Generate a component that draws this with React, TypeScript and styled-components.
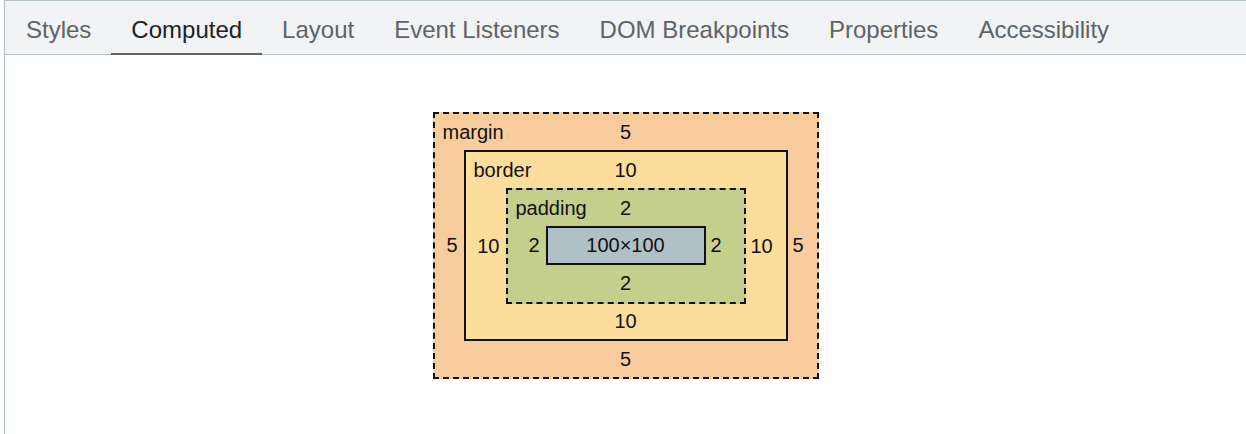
import styled, { createGlobalStyle } from "styled-components";

const GlobalStyle = createGlobalStyle`
    html, body {
        margin: 0;
        padding: 0;
        background: white;
    }
    body {
        font-family: "Liberation Sans", Arial, sans-serif;
    }
`;

const Panel = styled.div`
    margin-left: 4px;
    height: 434px;
    border-left: 1px solid #b3c1c7;
    box-sizing: border-box;
    overflow: hidden;
`;

const TabBar = styled.div`
    display: flex;
    height: 55px;
    box-sizing: border-box;
    padding-left: 1px;
    background: #f1f3f4;
    border-top: 1px solid #b3c1c7;
    border-bottom: 1px solid #b3c1c7;
`;

const Tab = styled.div<{ $active?: boolean }>`
    display: flex;
    align-items: center;
    padding: 6px 20px 0;
    margin-bottom: -1px;
    font-size: 24px;
    color: ${(p) => (p.$active ? "#202124" : "#5f6368")};
    border-bottom: 2px solid ${(p) => (p.$active ? "#5f6368" : "transparent")};
    white-space: nowrap;
`;

const Content = styled.div`
    display: flex;
    justify-content: center;
    padding-top: 57px;
`;

const Box = styled.div<{
    $bg: string;
    $dashed?: boolean;
    $side: number;
    $top: number;
    $bottom: number;
}>`
    display: grid;
    grid-template-columns: ${(p) => p.$side}px auto ${(p) => p.$side}px;
    grid-template-rows: ${(p) => p.$top}px auto ${(p) => p.$bottom}px;
    background: ${(p) => p.$bg};
    border: 2px ${(p) => (p.$dashed ? "dashed" : "solid")} #111;
    font-size: 20px;
    color: #111;
`;

const TopRow = styled.div`
    grid-column: 1 / 4;
    display: grid;
    grid-template-columns: 1fr auto 1fr;
    align-items: center;
    padding: 0 8px;
`;

const Label = styled.span`
    justify-self: start;
`;

const BottomRow = styled.div`
    grid-column: 1 / 4;
    display: flex;
    align-items: center;
    justify-content: center;
`;

const Side = styled.div<{ $right?: boolean }>`
    display: flex;
    align-items: center;
    justify-content: ${(p) => (p.$right ? "flex-start" : "flex-end")};
    padding: ${(p) => (p.$right ? "0 0 0 5px" : "0 6px 0 0")};
`;

const ContentBox = styled.div`
    width: 156px;
    height: 35px;
    display: flex;
    align-items: center;
    justify-content: center;
    background: #afc0c6;
    border: 2px solid #111;
    font-size: 20px;
    color: #111;
`;

const tabs = [
    "Styles",
    "Computed",
    "Layout",
    "Event Listeners",
    "DOM Breakpoints",
    "Properties",
    "Accessibility",
];

const App = () => {
    return (
        <Panel>
            <GlobalStyle />
            <TabBar>
                {tabs.map((t) => (
                    <Tab key={t} $active={t === "Computed"}>
                        {t}
                    </Tab>
                ))}
            </TabBar>
            <Content>
                <Box $bg="#f9cc9d" $dashed $side={29} $top={36} $bottom={36}>
                    <TopRow>
                        <Label>margin</Label>
                        <span>5</span>
                    </TopRow>
                    <Side>5</Side>
                    <Box $bg="#fcdd9c" $side={40} $top={36} $bottom={35}>
                        <TopRow>
                            <Label>border</Label>
                            <span>10</span>
                        </TopRow>
                        <Side>10</Side>
                        <Box $bg="#c3cf8b" $dashed $side={38} $top={36} $bottom={37}>
                            <TopRow>
                                <Label>padding</Label>
                                <span>2</span>
                            </TopRow>
                            <Side>2</Side>
                            <ContentBox>100×100</ContentBox>
                            <Side $right>2</Side>
                            <BottomRow>2</BottomRow>
                        </Box>
                        <Side $right>10</Side>
                        <BottomRow>10</BottomRow>
                    </Box>
                    <Side $right>5</Side>
                    <BottomRow>5</BottomRow>
                </Box>
            </Content>
        </Panel>
    );
};

export default App;
